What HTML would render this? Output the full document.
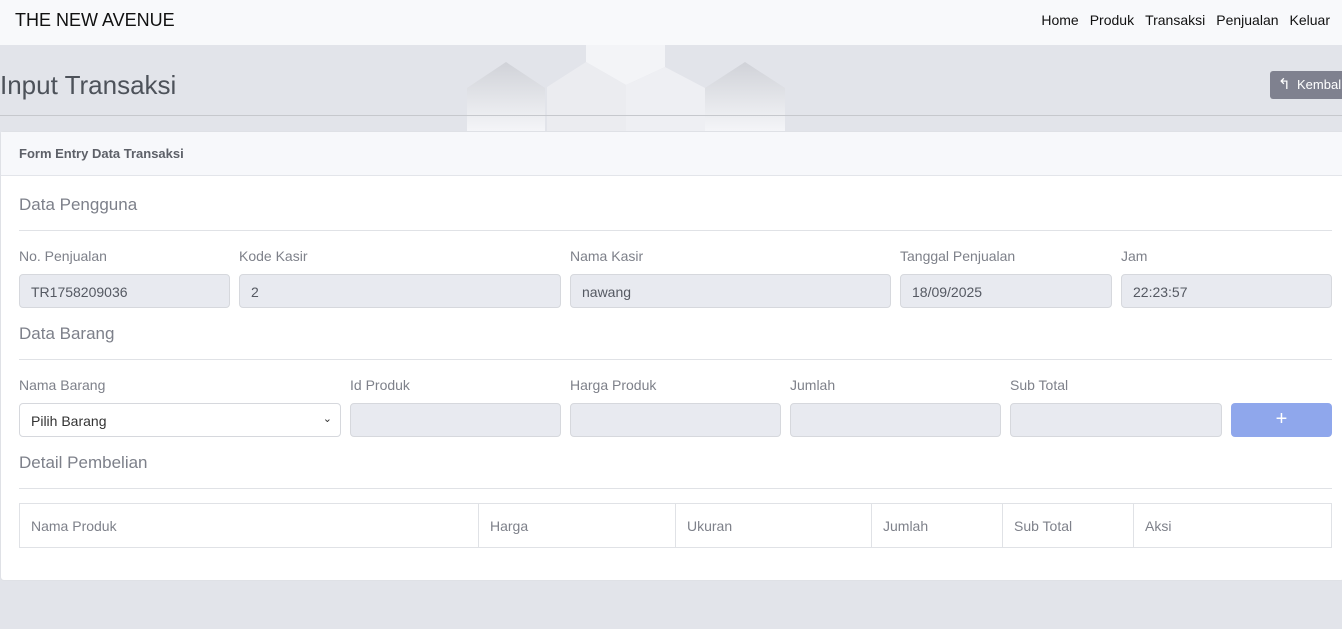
<!DOCTYPE html>
<html><head><meta charset="utf-8"><style>
*{box-sizing:border-box;margin:0;padding:0}
body{width:1342px;height:629px;overflow:hidden;background:#e2e4ea;font-family:"Liberation Sans",sans-serif;color:#212529;position:relative}
.nav{position:absolute;left:0;top:0;width:1342px;height:45px;background:#f8f9fb}
.brand{position:absolute;left:15px;top:10px;font-size:18px;color:#111}
.links{position:absolute;right:12px;top:12px;font-size:14px;color:#111}
.links span{margin-left:11px}
h1{position:absolute;left:0;top:70px;font-size:26px;font-weight:400;color:#4d525a}
.hr{position:absolute;left:0;top:115px;width:1342px;height:1px;background:#c6c8cd}
.back{position:absolute;left:1270px;top:71px;width:80px;height:28px;background:#7f818f;border-radius:3px;color:#fff;font-size:13px;padding:6px 0 0 27px}
.card{position:absolute;left:0;top:131px;width:1345px;height:450px;background:#fff;border:1px solid #dfe1e6;border-radius:4px}
.ch{height:44px;background:#f7f8fb;border-bottom:1px solid #e3e5ea;font-size:13px;font-weight:700;color:#5d6068;padding:14px 0 0 18px}
.t{position:absolute;font-size:17px;color:#7d808a}
.line{position:absolute;left:18px;width:1313px;height:1px;background:#e0e2e6}
.l{position:absolute;font-size:14px;color:#7e818a}
.in{position:absolute;height:34px;background:#e8eaf0;border:1px solid #d6d8dd;border-radius:4px;font-size:14px;color:#555962;padding:9px 0 0 11px}
table{position:absolute;left:18px;top:371px;width:1313px;height:45px;border-collapse:collapse;font-size:14px;color:#7e818a}
td{border:1px solid #e0e2e6;padding-left:11px}
</style></head><body>
<div class="nav"><div class="brand">THE NEW AVENUE</div><div class="links"><span>Home</span><span>Produk</span><span>Transaksi</span><span>Penjualan</span><span>Keluar</span></div></div>
<svg style="position:absolute;left:0;top:45px" width="1342" height="86">
<defs><linearGradient id="g" x1="0" y1="0" x2="0" y2="1"><stop offset="0" stop-color="#d0d2d8"/><stop offset="1" stop-color="#f4f5f8"/></linearGradient></defs>
<polygon points="467,43 506,17 545,43 545,86 467,86" fill="url(#g)"/>
<polygon points="705,43 745,17 785,43 785,86 705,86" fill="url(#g)"/>
<polygon points="586,0 665,0 665,22 626,40 586,17" fill="#f3f4f7"/>
<polygon points="547,42 586,17 626,40 626,86 547,86" fill="#ebecf0"/>
<polygon points="626,40 665,22 705,43 705,86 626,86" fill="#eeeff3"/>
</svg>
<h1>Input Transaksi</h1>
<div class="hr"></div>
<div class="back"><span style="position:absolute;left:8px;top:4px;font-size:15px">↰</span>Kembali</div>
<div class="card">
<div class="ch">Form Entry Data Transaksi</div>
<div class="t" style="left:18px;top:63px">Data Pengguna</div>
<div class="line" style="top:98px"></div>
<div class="l" style="left:18px;top:116px">No. Penjualan</div>
<div class="l" style="left:238px;top:116px">Kode Kasir</div>
<div class="l" style="left:569px;top:116px">Nama Kasir</div>
<div class="l" style="left:899px;top:116px">Tanggal Penjualan</div>
<div class="l" style="left:1120px;top:116px">Jam</div>
<div class="in" style="left:18px;top:142px;width:211px">TR1758209036</div>
<div class="in" style="left:238px;top:142px;width:322px">2</div>
<div class="in" style="left:569px;top:142px;width:321px">nawang</div>
<div class="in" style="left:899px;top:142px;width:212px">18/09/2025</div>
<div class="in" style="left:1120px;top:142px;width:211px">22:23:57</div>
<div class="t" style="left:18px;top:192px">Data Barang</div>
<div class="line" style="top:227px"></div>
<div class="l" style="left:18px;top:245px">Nama Barang</div>
<div class="l" style="left:349px;top:245px">Id Produk</div>
<div class="l" style="left:569px;top:245px">Harga Produk</div>
<div class="l" style="left:789px;top:245px">Jumlah</div>
<div class="l" style="left:1009px;top:245px">Sub Total</div>
<div class="in" style="left:18px;top:271px;width:322px;background:#fff;color:#333">Pilih Barang<span style="position:absolute;right:8px;top:8px;font-size:11px">⌄</span></div>
<div class="in" style="left:349px;top:271px;width:211px"></div>
<div class="in" style="left:569px;top:271px;width:211px"></div>
<div class="in" style="left:789px;top:271px;width:211px"></div>
<div class="in" style="left:1009px;top:271px;width:212px"></div>
<div style="position:absolute;left:1230px;top:271px;width:101px;height:34px;background:#8fa7ec;border-radius:4px;color:#fff;font-size:20px;text-align:center;line-height:32px">+</div>
<div class="t" style="left:18px;top:321px">Detail Pembelian</div>
<div class="line" style="top:356px"></div>
<table><tr><td style="width:459px">Nama Produk</td><td style="width:197px">Harga</td><td style="width:196px">Ukuran</td><td style="width:131px">Jumlah</td><td style="width:131px">Sub Total</td><td>Aksi</td></tr></table>
</div>
</body></html>
